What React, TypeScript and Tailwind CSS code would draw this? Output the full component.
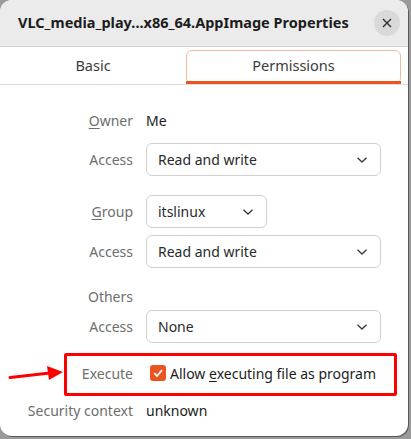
import React from 'react';

const Chevron: React.FC = () => (
  <svg width="12" height="8" viewBox="0 0 12 8" className="shrink-0">
    <path d="M1.5 1.8 L6 6 L10.5 1.8" fill="none" stroke="#3a3a3a" strokeWidth="1.3" />
  </svg>
);

const Dropdown: React.FC<{ value: string; wide?: boolean }> = ({ value, wide = true }) => (
  <div
    className={`flex items-center justify-between h-[33px] rounded-[6px] border border-[#d0d0d0] bg-white pl-[11px] pr-[12px] text-[#2a2a2a] ${
      wide ? 'w-[235px]' : 'w-[121px]'
    }`}
  >
    <span>{value}</span>
    <Chevron />
  </div>
);

const Label: React.FC<{ children: React.ReactNode }> = ({ children }) => (
  <div className="w-[133px] shrink-0 text-right text-[#6e6e6e] whitespace-nowrap">{children}</div>
);

export default function App() {
  return (
    <div
      className="w-[411px] h-[439px] bg-[#9a9a9a] text-[14px]"
      style={{ fontFamily: '"Noto Sans", "Open Sans", sans-serif' }}
    >
      <div className="relative w-[408px] h-[436px] rounded-[12px] overflow-hidden bg-white shadow-[1px_1px_0_#5a5a5a]">
        {/* Header */}
        <div className="flex items-center justify-between h-[47px] bg-[#ebebeb] border-b border-[#d2d2d2] pl-[18px] pr-[8px]">
          <div className="font-bold text-[#1c1c1c] text-[14.5px] whitespace-nowrap">VLC_media_play...x86_64.AppImage Properties</div>
          <div className="flex items-center justify-center w-[26px] h-[26px] rounded-full bg-[#d9d9d9]">
            <svg width="10" height="10" viewBox="0 0 10 10">
              <path d="M1 1 L9 9 M9 1 L1 9" stroke="#2e2e2e" strokeWidth="1.4" />
            </svg>
          </div>
        </div>

        {/* Tabs */}
        <div className="flex h-[38px] border-b border-[#dcdcdc]">
          <div className="w-[186px] flex items-center justify-center text-[#3c3c3c] text-[14.5px]">Basic</div>
          <div className="relative w-[215px] mt-[3px] pb-[3px] flex items-center justify-center rounded-[6px] border border-[#f5b9a2] text-[#3c3c3c] text-[14.5px]">
            Permissions
            <div className="absolute left-[-1px] right-[-1px] bottom-[-1px] h-[3px] bg-[#e95420]" />
          </div>
        </div>

        {/* Content */}
        <div className="flex flex-col pt-[23px] pr-[27px]">
          <div className="flex items-center h-[24px] gap-[13px]">
            <Label>
              <span className="underline underline-offset-2">O</span>wner
            </Label>
            <span className="text-[#1c1c1c]">Me</span>
          </div>
          <div className="flex items-center gap-[13px] mt-[11px]">
            <Label>Access</Label>
            <Dropdown value="Read and write" />
          </div>
          <div className="flex items-center gap-[13px] mt-[19px]">
            <Label>
              <span className="underline underline-offset-2">G</span>roup
            </Label>
            <Dropdown value="itslinux" wide={false} />
          </div>
          <div className="flex items-center gap-[13px] mt-[7px]">
            <Label>Access</Label>
            <Dropdown value="Read and write" />
          </div>
          <div className="flex items-center h-[24px] gap-[13px] mt-[16px]">
            <Label>Others</Label>
          </div>
          <div className="flex items-center gap-[13px] mt-[2px]">
            <Label>Access</Label>
            <Dropdown value="None" />
          </div>
          <div className="flex items-center h-[24px] gap-[13px] mt-[18px]">
            <Label>Execute</Label>
            <div className="flex items-center gap-[4px] ml-[4px]">
              <div className="flex items-center justify-center w-[16px] h-[16px] rounded-[3px] bg-[#e95420]">
                <svg width="12" height="12" viewBox="0 0 12 12">
                  <path d="M2.2 6.2 L5 9 L10 3.2" fill="none" stroke="#ffffff" strokeWidth="1.8" />
                </svg>
              </div>
              <span className="text-[#1c1c1c] whitespace-nowrap">
                Allow <span className="underline underline-offset-2">e</span>xecuting file as program
              </span>
            </div>
          </div>
          <div className="flex items-center h-[24px] gap-[13px] mt-[13px]">
            <Label>Security context</Label>
            <span className="text-[#1c1c1c]">unknown</span>
          </div>
        </div>

        {/* Annotation */}
        <div className="absolute left-[64px] top-[353px] w-[333px] h-[43px] border-[3px] border-[#ff0000] rounded-[2px]" />
        <svg className="absolute left-0 top-[362px]" width="66" height="24" viewBox="0 0 66 24">
          <path d="M10 15.5 L50 11" stroke="#ff0000" strokeWidth="3" strokeLinecap="round" />
          <path d="M47 4 L63 10 L49 18 Z" fill="#ff0000" />
        </svg>
      </div>
    </div>
  );
}
